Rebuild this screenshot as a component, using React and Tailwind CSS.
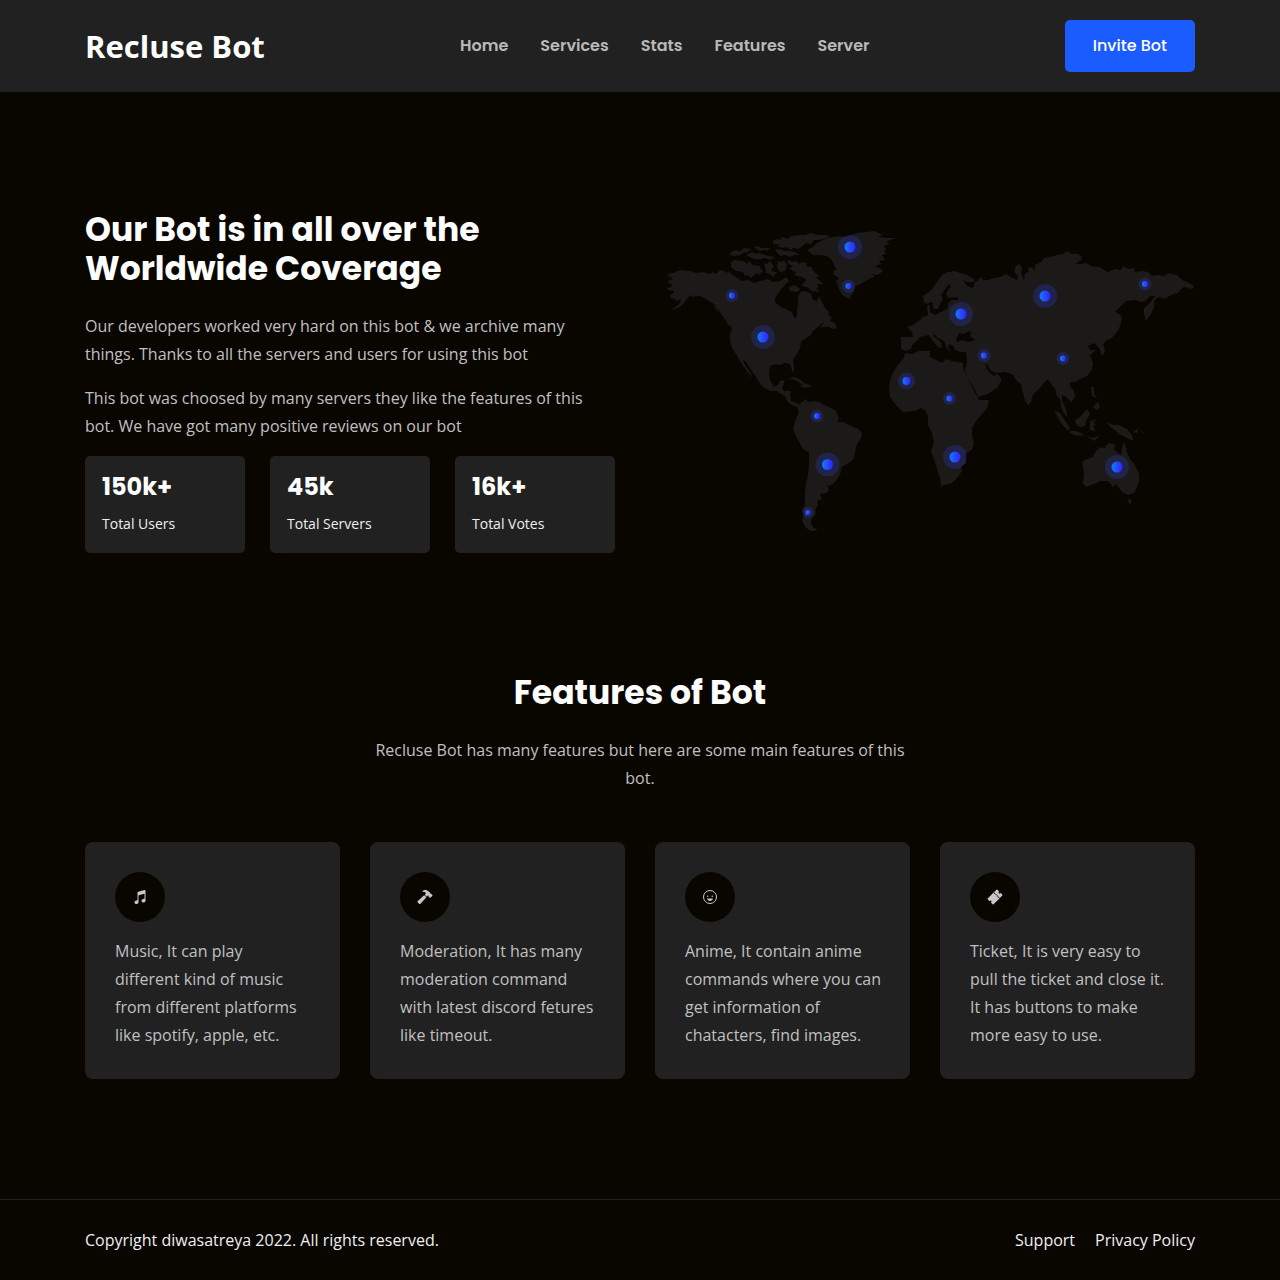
import React from "react";
import { IoMusicalNotes, IoHammer, IoHappyOutline, IoTicket } from "react-icons/io5";

const NAV = ["Home", "Services", "Stats", "Features", "Server"];

const STATS = [
  { value: "150k+", label: "Total Users" },
  { value: "45k", label: "Total Servers" },
  { value: "16k+", label: "Total Votes" },
];

const FEATURES = [
  { icon: IoMusicalNotes, text: "Music, It can play\ndifferent kind of music from different platforms like spotify, apple, etc." },
  { icon: IoHammer, text: "Moderation, It has many moderation command with latest discord fetures like timeout." },
  { icon: IoHappyOutline, text: "Anime, It contain anime commands where you can get information of chatacters, find images." },
  { icon: IoTicket, text: "Ticket, It is very easy to pull the ticket and close it. It has buttons to make more easy to use." },
];

const LAND = [
  // North and Central America
  "682,270 677,271 674,273 670,273 667,276 671,277 673,279 668,281 668,283 673,285 671,287 667,288 668,290 674,291 674,293 670,295 671,298 675,299 676,301 681,299 680,303 677,306 672,309 673,310 680,307 684,303 687,299 690,295 693,297 699,296 704,298 709,301 714,304 717,307 720,312 724,318 728,322 731,326 732,330 730,333 730,340 731,346 734,351 737,356 740,361 744,367 749,374 752,378 751,374 747,368 744,363 743,360 746,362 750,368 754,374 758,380 761,385 766,389 772,391 777,391 781,394 785,396 788,402 792,405 797,407 799,404 794,402 791,401 790,395 791,391 784,391 782,388 784,383 785,380 780,381 778,385 774,387 770,380 769,374 770,366 775,364 780,365 785,363 790,364 792,370 794,373 794,367 793,359 797,354 800,348 801,342 805,339 811,335 813,331 817,328 822,323 824,322 820,328 823,327 829,327 833,329 837,328 835,323 830,321 832,317 828,315 829,312 825,308 822,302 819,296 817,301 813,300 811,294 806,291 800,292 798,298 798,304 797,310 797,317 794,318 792,312 786,309 781,307 775,302 775,298 780,291 784,286 789,281 786,277 780,281 773,282 768,279 760,281 754,283 748,280 742,281 736,277 731,274 729,271 726,273 724,271 720,270 716,274 713,272 710,274 703,272 696,273 690,271",
  // Islands off Alaska and British Columbia
  "710,302 714,305 716,309 720,314 717,307",
  "726,320 729,321 732,327 728,325",
  // Canadian Arctic
  "731,262 735,260 744,261 747,264 749,261 753,265 760,266 761,269 763,271 759,275 757,273 751,278 748,275 745,276 743,272 736,271 731,267",
  "729,254 733,251 737,250 739,252 744,248 751,249 747,253 744,252 740,255 733,256",
  "746,255 752,252 756,254 760,253 768,256 775,257 770,260 765,258 761,259 754,259",
  "754,247 758,246 762,248 770,248 768,251 764,250 759,251",
  "764,263 767,264 770,261 774,266 771,271 777,272 773,277 770,274 766,273",
  "773,241 776,239 780,240 782,237 788,239 791,236 799,235 805,235 811,233 818,235 824,235 830,236 826,238 819,240 814,240 811,244 806,243 802,246 799,249 794,248 790,250 787,247 783,248 776,246 781,244 773,244",
  "775,250 780,249 784,251 790,251 795,252 800,255 795,255 790,257 785,255 780,256",
  "778,261 781,262 784,260 787,265 785,271 780,272 777,267",
  "788,260 792,262 796,261 799,264 803,262 807,263 806,266 811,267 814,272 820,276 816,277 818,279 823,284 817,284 819,287 816,288 820,292 812,291 807,287 802,286 804,281 799,280 800,277 794,275 796,272 789,269 793,266 788,264",
  "789,287 795,285 800,289 797,292 790,291",
  // Greenland
  "807,250 813,247 817,243 827,238 840,236 846,237 857,233 866,232 874,231 883,235 878,237 887,238 896,238 888,241 886,243 890,244 884,246 886,249 884,252 887,254 882,255 885,260 879,261 881,264 875,266 881,269 883,271 878,275 871,274 875,276 867,280 861,284 855,286 854,292 851,295 850,299 843,296 840,291 838,286 836,281 839,278 833,274 834,270 837,270 834,265 832,260 827,256 820,255 813,255",
  // Caribbean
  "787,380 793,377 799,379 804,383 809,385 803,385 797,381 791,379",
  "799,386 807,384 812,386 805,388",
  // South America
  "797,406 801,403 806,399 808,402 814,401 820,402 824,405 831,408 836,411 839,419 837,422 843,422 849,425 858,429 862,433 861,438 857,444 855,452 853,460 849,463 842,467 840,475 835,482 830,486 827,485 829,490 826,493 820,494 822,499 817,501 818,505 815,510 816,514 812,518 811,523 813,527 818,530 811,531 805,527 802,520 804,514 802,511 805,504 805,493 806,483 808,475 809,463 809,453 803,449 799,442 795,434 793,429 796,418 799,413",
  // Europe and Asia
  "901,337 908,337 913,337 912,332 907,327 913,325 920,320 923,317 928,315 927,308 928,304 930,307 930,312 935,315 943,311 948,308 948,304 951,300 958,300 958,297 948,298 946,293 951,286 949,284 944,291 941,295 943,299 940,304 938,309 934,309 932,302 927,304 924,302 923,296 929,292 933,288 937,282 942,275 948,272 955,271 960,273 967,275 974,279 974,282 967,282 963,280 967,286 973,288 975,282 978,281 980,277 983,280 988,280 994,278 1001,277 1006,274 1011,277 1017,280 1018,276 1014,272 1016,266 1019,264 1022,267 1021,273 1024,280 1025,273 1029,272 1028,268 1032,267 1035,271 1035,265 1041,262 1044,258 1051,257 1057,255 1063,254 1067,251 1072,254 1078,254 1082,257 1081,260 1075,264 1081,264 1086,263 1091,266 1099,267 1108,272 1115,269 1121,270 1123,266 1128,269 1134,268 1135,272 1142,271 1148,272 1152,276 1158,275 1164,276 1168,273 1177,275 1182,280 1187,282 1194,286 1192,289 1184,287 1180,290 1178,293 1171,295 1165,299 1158,297 1154,301 1154,307 1151,314 1146,321 1144,314 1144,308 1150,303 1155,296 1150,296 1145,301 1141,302 1135,300 1126,301 1120,307 1115,312 1121,315 1122,319 1119,329 1112,338 1107,340 1103,344 1105,350 1104,354 1101,355 1100,349 1097,346 1094,343 1088,346 1090,350 1096,350 1090,355 1092,360 1093,365 1091,371 1087,376 1080,379 1075,382 1070,382 1070,386 1074,391 1075,397 1071,402 1066,397 1062,395 1062,401 1065,407 1067,413 1067,417 1063,412 1061,406 1060,399 1057,396 1055,389 1051,384 1048,379 1043,384 1038,390 1033,394 1031,402 1028,405 1025,400 1023,393 1021,384 1017,381 1012,374 1004,372 996,373 990,370 987,364 985,364 988,371 994,376 997,374 1002,379 998,387 988,394 978,397 974,388 968,378 965,370 967,362 966,352 961,352 955,350 953,346 949,344 948,348 952,352 947,349 944,341 938,338 934,334 933,336 941,342 942,348 938,347 933,341 929,335 920,337 917,341 912,345 911,349 906,351 901,349",
  // Africa
  "905,353 912,354 919,351 930,351 930,357 936,360 942,363 946,359 952,361 963,363 963,368 969,380 974,391 979,400 989,400 987,408 982,414 976,421 972,428 972,435 974,443 972,450 965,454 966,463 961,466 962,471 957,478 952,483 941,486 940,478 937,469 934,459 931,451 934,442 932,433 928,425 928,416 926,411 921,408 915,411 903,412 896,405 890,397 889,386 891,377 897,366 904,358",
  // Indonesia, the Philippines and New Guinea
  "1054,410 1060,413 1066,422 1070,428 1068,431 1061,423",
  "1070,431 1076,431 1083,434 1083,436 1075,435 1070,433",
  "1086,436 1092,438 1100,436 1094,441",
  "1075,420 1080,417 1087,409 1090,414 1086,421 1085,426 1080,427 1076,424",
  "1090,421 1098,419 1093,422 1096,425 1093,425 1095,431 1090,430",
  "1091,387 1094,387 1094,394 1097,398 1092,396",
  "1093,407 1098,402 1100,407 1097,410",
  "1107,422 1113,425 1119,425 1127,429 1131,434 1134,441 1127,438 1119,434 1115,430 1110,427",
  "1133,432 1139,428 1137,433",
  "1141,430 1144,434 1142,433",
  "1065,385 1069,384 1068,388",
  // Australia and Tasmania
  "1082,462 1087,459 1093,457 1096,451 1101,447 1105,449 1106,445 1110,443 1115,445 1114,450 1121,455 1123,443 1125,444 1127,452 1130,459 1135,465 1139,474 1139,481 1135,492 1129,495 1123,493 1119,488 1116,484 1113,487 1108,481 1100,481 1094,484 1086,487 1083,483 1084,474",
  "1127,499 1132,500 1130,505",
];

const SEAS = [
  // Black Sea
  "956,339 959,333 964,334 969,331 971,332 970,336 975,340 969,342 962,340 957,342",
  // Baffin inlets
  "801,276 806,280 804,283 799,281",
  "808,262 812,264 809,266",
];

// [x, y, halo radius, core radius]
const PINS = [
  [850, 247, 12, 5.5], [763, 337, 12, 5.5], [961, 314, 12, 5.5], [1045, 296, 12, 5.5],
  [827.5, 464.5, 12, 5.5], [955, 457, 12, 5.5], [1117, 467, 12, 5.5], [906.5, 381, 8.5, 4],
  [732, 295.5, 6.5, 3], [848.5, 286, 6.5, 3], [984, 355.5, 6.5, 3], [949.5, 398.5, 6.5, 3],
  [1063, 358.5, 6.5, 3], [1145, 284, 6.5, 3], [817, 416, 6.5, 3], [808, 512.5, 5.5, 2.5],
];

function WorldMap() {
  return (
    <svg viewBox="665 231 530 302" className="block h-auto w-full" role="img" aria-label="World map">
      <defs>
        <linearGradient id="pin" x1="0" y1="0" x2="1" y2="0">
          <stop offset="0" stopColor="#0d7dff" />
          <stop offset="1" stopColor="#3a1dff" />
        </linearGradient>
      </defs>
      <g fill="#1b1a18">
        {LAND.map((p) => <polygon key={p} points={p} />)}
      </g>
      <g fill="#090600">
        {SEAS.map((p) => <polygon key={p} points={p} />)}
      </g>
      {PINS.map(([x, y, halo, core]) => (
        <g key={`${x}-${y}`}>
          <circle cx={x} cy={y} r={halo} fill="#3346ff" fillOpacity="0.22" />
          <circle cx={x} cy={y} r={core} fill="url(#pin)" />
        </g>
      ))}
    </svg>
  );
}

const HEADING = "font-['Poppins','Inter',sans-serif] font-bold text-white";

export default function App() {
  return (
    <div className="min-h-screen bg-[#090600] font-['Open_Sans',sans-serif] text-base leading-7 text-[#c0c0c0]">
      <header className="bg-[#212121] px-5 py-5">
        <div className="mx-auto flex max-w-[1110px] flex-wrap items-center justify-between gap-4">
          <a href="#home" className="text-[31px] leading-[52px] font-bold text-white">Recluse Bot</a>
          <nav className="flex flex-wrap gap-8 font-['Poppins','Inter',sans-serif] text-base font-semibold text-[#b9b9b9]">
            {NAV.map((n) => <a key={n} href={`#${n.toLowerCase()}`}>{n}</a>)}
          </nav>
          <button type="button" className="h-[52px] rounded-[5px] bg-[#1a5cff] px-7 font-['Poppins','Inter',sans-serif] text-base font-medium text-white">
            Invite Bot
          </button>
        </div>
      </header>

      <main className="px-5">
        <section id="stats" className="mx-auto grid max-w-[1110px] items-center gap-[50px] pt-[118px] lg:grid-cols-2">
          <div>
            <h2 className={`${HEADING} text-[33px] leading-[39px]`}>
              Our Bot is in all over the Worldwide Coverage
            </h2>
            <p className="mt-6">
              Our developers worked very hard on this bot &amp; we archive many things. Thanks to all the servers and users for using this bot
            </p>
            <p className="mt-4">
              This bot was choosed by many servers they like the features of this bot. We have got many positive reviews on our bot
            </p>
            <div className="mt-4 grid grid-cols-3 gap-[25px]">
              {STATS.map((s) => (
                <div key={s.label} className="rounded-[5px] bg-[#212121] px-[17px] pt-4 pb-[15px]">
                  <h3 className={`${HEADING} text-2xl leading-[29px]`}>{s.value}</h3>
                  <p className="mt-[9px] text-sm leading-7 text-[#efefef]">{s.label}</p>
                </div>
              ))}
            </div>
          </div>
          <WorldMap />
        </section>

        <section id="features" className="mx-auto max-w-[1110px] py-[120px]">
          <h2 className={`${HEADING} text-center text-[33px] leading-[39px]`}>Features of Bot</h2>
          <p className="mx-auto mt-6 max-w-[540px] text-center">
            Recluse Bot has many features but here are some main features of this bot.
          </p>
          <div className="mt-[50px] grid gap-[30px] sm:grid-cols-2 lg:grid-cols-4">
            {FEATURES.map(({ icon: Icon, text }) => (
              <article key={text} className="rounded-lg bg-[#212121] py-[30px] pr-7 pl-[30px]">
                <span className="flex size-[50px] items-center justify-center rounded-full bg-[#090600]">
                  <Icon className="size-4 text-[#c9c7cc]" />
                </span>
                <p className="mt-[15px] whitespace-pre-line">{text}</p>
              </article>
            ))}
          </div>
        </section>
      </main>

      <footer className="border-t border-[#212121] px-5 py-[26px] text-[#efefef]">
        <div className="mx-auto flex max-w-[1110px] flex-wrap justify-between gap-4">
          <p>Copyright diwasatreya 2022. All rights reserved.</p>
          <div className="flex gap-5">
            <a href="#support">Support</a>
            <a href="#privacy">Privacy Policy</a>
          </div>
        </div>
      </footer>
    </div>
  );
}
